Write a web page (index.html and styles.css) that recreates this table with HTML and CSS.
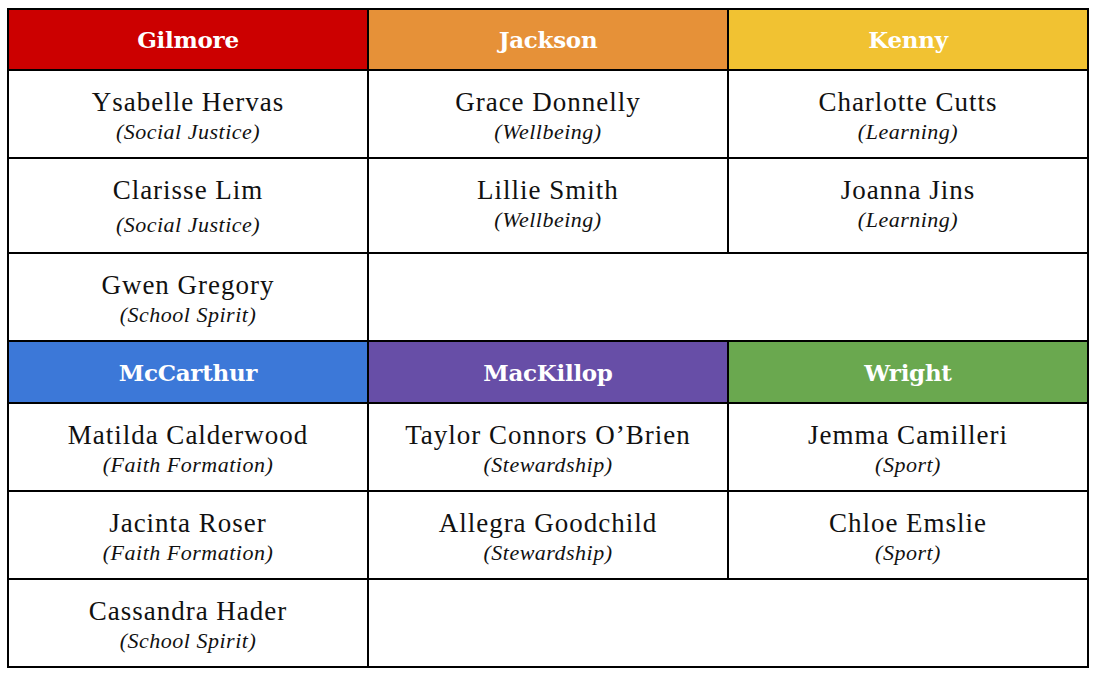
FILE: index.html
```html
<!DOCTYPE html>
<html lang="en">
<head>
<meta charset="utf-8">
<title>Houses</title>
<link rel="stylesheet" href="styles.css">
</head>
<body>
<table class="houses">
  <colgroup><col class="c"><col class="c"><col class="c"></colgroup>
  <tr class="head">
    <th class="gilmore">Gilmore</th>
    <th class="jackson">Jackson</th>
    <th class="kenny">Kenny</th>
  </tr>
  <tr class="row">
    <td><div class="name">Ysabelle Hervas</div><div class="role">(Social Justice)</div></td>
    <td><div class="name">Grace Donnelly</div><div class="role">(Wellbeing)</div></td>
    <td><div class="name">Charlotte Cutts</div><div class="role">(Learning)</div></td>
  </tr>
  <tr class="row tall">
    <td><div class="name">Clarisse Lim</div><div class="role spaced">(Social Justice)</div></td>
    <td><div class="name">Lillie Smith</div><div class="role">(Wellbeing)</div></td>
    <td><div class="name">Joanna Jins</div><div class="role">(Learning)</div></td>
  </tr>
  <tr class="row">
    <td><div class="name">Gwen Gregory</div><div class="role">(School Spirit)</div></td>
    <td colspan="2"></td>
  </tr>
  <tr class="head head2">
    <th class="mccarthur">McCarthur</th>
    <th class="mackillop">MacKillop</th>
    <th class="wright">Wright</th>
  </tr>
  <tr class="row">
    <td><div class="name">Matilda Calderwood</div><div class="role">(Faith Formation)</div></td>
    <td><div class="name">Taylor Connors O’Brien</div><div class="role">(Stewardship)</div></td>
    <td><div class="name">Jemma Camilleri</div><div class="role">(Sport)</div></td>
  </tr>
  <tr class="row">
    <td><div class="name">Jacinta Roser</div><div class="role">(Faith Formation)</div></td>
    <td><div class="name">Allegra Goodchild</div><div class="role">(Stewardship)</div></td>
    <td><div class="name">Chloe Emslie</div><div class="role">(Sport)</div></td>
  </tr>
  <tr class="row">
    <td><div class="name">Cassandra Hader</div><div class="role">(School Spirit)</div></td>
    <td colspan="2"></td>
  </tr>
</table>
</body>
</html>
```

FILE: styles.css
```css
html, body {
  margin: 0;
  background: #ffffff;
}

body {
  padding: 8px 0 0 7px;
  font-family: "Liberation Serif", "Times New Roman", serif;
  color: #111111;
}

.houses {
  border-collapse: collapse;
  table-layout: fixed;
  width: 1082px;
}

.houses .c {
  width: 360px;
}

.houses th,
.houses td {
  border: 2px solid #000000;
  padding: 0;
  text-align: center;
}

.head {
  height: 61px;
}

.head2 {
  height: 62px;
}

.head th {
  color: #ffffff;
  font-family: "DejaVu Serif", serif;
  font-weight: bold;
  font-size: 23px;
  letter-spacing: -0.3px;
  vertical-align: middle;
}

.gilmore { background: #cc0000; }
.jackson { background: #e69138; }
.kenny { background: #f1c232; }
.mccarthur { background: #3c78d8; }
.mackillop { background: #674ea7; }
.wright { background: #6aa84f; }

.row {
  height: 88px;
}

.row.tall {
  height: 95px;
}

.row td {
  vertical-align: top;
  padding-top: 16px;
}

.name {
  font-size: 27px;
  line-height: 30px;
  letter-spacing: 1px;
}

.role {
  font-style: italic;
  font-size: 22px;
  line-height: 30px;
  letter-spacing: 0.5px;
}

.role.spaced {
  margin-top: 5px;
}
```
